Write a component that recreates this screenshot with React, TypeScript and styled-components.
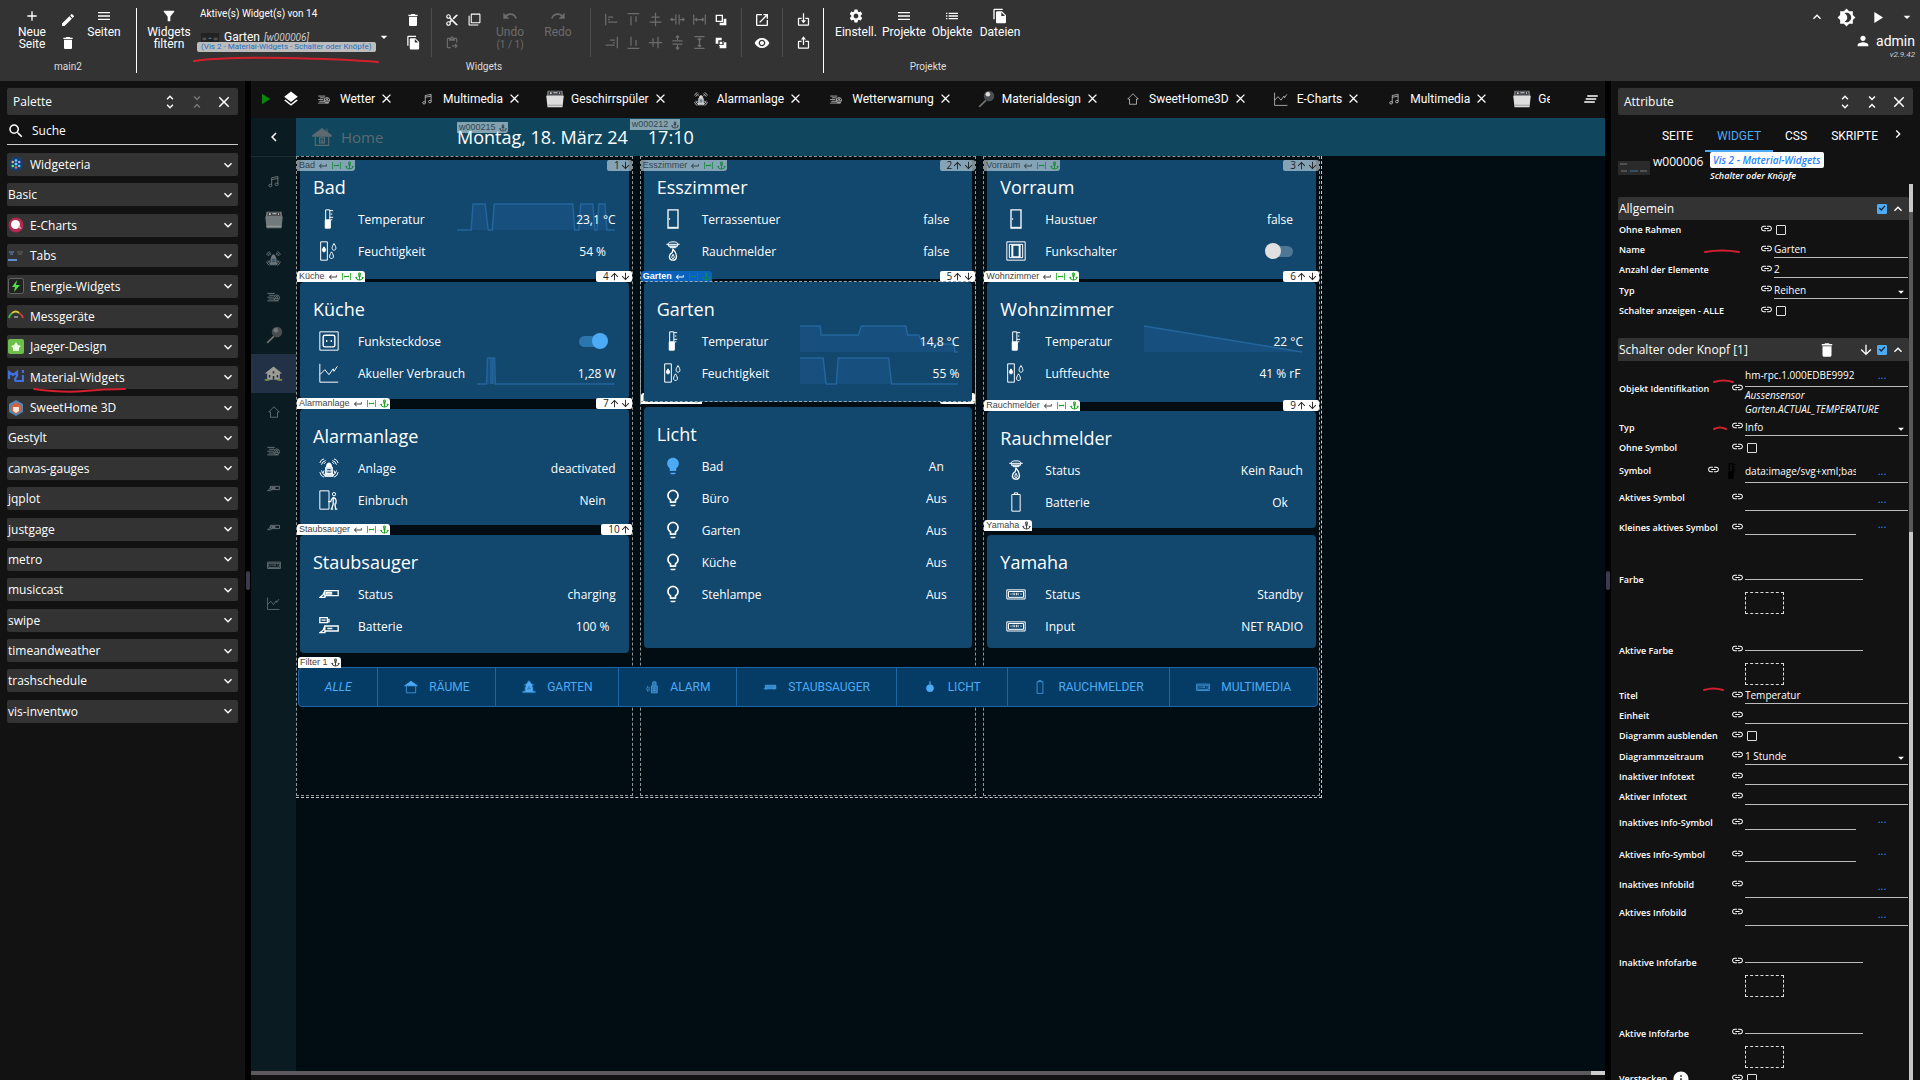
import React from "react";
import styled, { createGlobalStyle, css } from "styled-components";
import {
  MdAdd, MdEdit, MdDelete, MdMenu, MdFilterAlt, MdContentCut, MdFilterNone, MdFileCopy, MdContentPasteGo,
  MdUndo, MdRedo, MdOpenInNew, MdVisibility, MdSettings, MdList, MdKeyboardArrowUp, MdBrightness4, MdPlayArrow,
  MdArrowDropDown, MdPerson, MdUnfoldMore, MdUnfoldLess, MdClose, MdSearch, MdExpandMore, MdExpandLess,
  MdLayers, MdClearAll, MdChevronLeft, MdChevronRight, MdLink, MdArrowDownward, MdArrowUpward,
  MdLightbulb, MdLightbulbOutline, MdInfo, MdKeyboardReturn,
} from "react-icons/md";
import { BiImport, BiExport } from "react-icons/bi";
import { AiOutlineColumnWidth } from "react-icons/ai";
import { FaAnchor } from "react-icons/fa";

const sans = `"Open Sans", "Noto Sans", sans-serif`;
const roboto = `Roboto, "Noto Sans", sans-serif`;
const arial = `"Liberation Sans", Arial, sans-serif`;
const blue = "#4dabf5";

const Global = createGlobalStyle`
  *, *::before, *::after { box-sizing: border-box; }
  body { margin: 0; background: #000; color: #fff; font-family: ${sans}; overflow: hidden; }
  button, input, select { font: inherit; color: inherit; background: none; border: 0; padding: 0; margin: 0; border-radius: 0; }
  button { cursor: pointer; }
  input, select { outline: none; min-width: 0; }
  svg { display: block; flex: none; }
  h1, h2, h3, p, ul { margin: 0; padding: 0; font-weight: 400; list-style: none; }
`;

/* ---------- drawings ---------- */

type Name =
  | "music" | "washer" | "alarm" | "weather" | "ball" | "house" | "home" | "vacuum" | "vacuumBattery" | "radio" | "chart"
  | "thermo" | "humidity" | "door" | "smoke" | "socket" | "switch" | "burglar" | "battery" | "bulb" | "bulbOn"
  | "barn" | "room" | "gnome" | "lock" | "drop" | "robot";

const shapes: Record<Exclude<Name, "bulb" | "bulbOn">, React.ReactNode> = {
  music: (<><path d="M9 18V6l10-2v12M9 9l10-2" /><ellipse cx="7" cy="18.500" rx="2.500" ry="2" /><ellipse cx="17" cy="16.500" rx="2.500" ry="2" /></>),
  washer: (<g stroke="none"><path d="M3 2h18l1 7H2z" fill="#777" /><path d="M5 3h14l1 4H4z" fill="#3d4046" /><path d="M6 4h2v2H6zM10 4h5v1h-5zM17 4h1v2h-1z" fill="#ccc" /><path d="M1.500 8h21L21 22H3z" fill="currentColor" /><path d="M3 19.500h18" stroke="#999" /></g>),
  alarm: (<><path d="M8 19v-8h8v8zM7 19h10v3H7z" fill="currentColor" fillOpacity=".8" /><path d="M9 11q0-5 3-5t3 5" fill="currentColor" /><path d="M10 14h4M10 17h4" stroke="#12476e" /><path d="M1 6q1-4 5-5M3 8q1-4 5-5M6 7l2-2M23 6q-1-4-5-5M21 8q-1-4-5-5M18 7l-2-2M1 17q1 5 5 6M3 15q1 5 5 6M6 15l-1 3M23 17q-1 5-5 6M21 15q-1 5-5 6M18 15l1 3" /></>),
  weather: (<><path d="M2 7h12M5 10h8M2 13h9M4 16h9M2 19h18" /><circle cx="17" cy="14" r="4.500" /><path d="m17 11 2.500 4.500h-5z" /></>),
  ball: (<g stroke="none"><path d="M2 22 11 13l1.500 1.500L4 23z" fill="#777" /><circle cx="16" cy="8" r="7" fill="#4b4e51" /><circle cx="14.500" cy="5.500" r="3" fill="currentColor" /></g>),
  house: (<g stroke="none"><path d="M12 3 1 12h3v8h16v-8h3z" fill="currentColor" /><path d="M11 9h2v3h-2zM6 14h2v3H6zM16 14h2v3h-2zM11 15h2v5h-2z" fill="#2b3138" /><path d="M1 19h6v2H1zM17 19h6v2h-6z" fill="#7d8a4a" /></g>),
  home: <path d="M12 3 3 12h3v9h12v-9h3z" />,
  vacuum: (<><path d="M7 8h16v6H7zM7 8l-2 5-4 3h6l1-2M9 10h6v2H9z" strokeWidth="1.600" /></>),
  vacuumBattery: (<><path d="M7 12h16v6H7zM7 12l-2 5-4 3h6l1-2M10 15h6" strokeWidth="1.600" /><path d="M1 2h9v6H1zM10 4h2v3h-2zM3 5h5" strokeWidth="1.600" /></>),
  radio: (<><path d="M1 7h22v11H1zM3 9h18v7H3z" /><path d="M8 12h8" strokeWidth="3" strokeDasharray="1 1" /><path d="M5.500 12h1M17.500 12h1" strokeWidth="2" /></>),
  chart: (<><path d="M1 1v22h22" /><path d="m1 14 6-6 5 6 5-7 1 3 4-6" /></>),
  thermo: (<><path d="M8 1h5v21H8z" /><path d="M7.500 13h6v10h-6z" fill="currentColor" /><path d="M13 2h4M14 6h2M13 10h4M14 13h2" /></>),
  humidity: (<><path d="M2 1h8v22H2z" /><path d="M6 7c3 4 2 6 0 6s-3-2 0-6z" fill="currentColor" /><path d="M18 3c4 6 2 8 0 8s-4-2 0-8zM15 13c4 6 2 8 0 8s-4-2 0-8z" /></>),
  door: (<><path d="M6 1h12v22H6z" strokeWidth="1.600" /><path d="M8 11v2" /><path d="M6 22h12" /></>),
  smoke: (<><ellipse cx="12" cy="4" rx="6" ry="3" /><path d="M4 4h16M6 6h12M8 8h8" /><path d="M12 10c6 6 5 13 0 13s-6-6-1-9z" strokeWidth="1.600" /><path d="M12 16c2 3 2 5 0 5s-2-2 0-5z" /></>),
  socket: (<><path d="M1 1h22v22H1z" /><rect x="5" y="5" width="14" height="14" rx="2" strokeWidth="1.700" /><path d="M8.500 12h1.500M14 12h1.500" strokeWidth="2.500" /></>),
  switch: (<><path d="M1 1h22v22H1zM4 4h16v16H4zM7 4v16M17 4v16" /><path d="M8 5h8v14H8z" strokeWidth="1.600" /></>),
  burglar: (<><path d="M1 1h11v22H1z" /><circle cx="18" cy="5" r="2" /><path d="M17 9q-2 1-3 5h-3M17 9c4 1 4 4 3 8M17 10v7l-2 6M19 16l1 7M14 23h3M19 23h3" strokeWidth="1.600" /></>),
  battery: <path d="M7 3h10v20H7zM10 3V1h4v2" />,
  barn: (<><path d="M1 10 12 2l11 8v1H1z" fill="currentColor" /><path d="M4 11v11h16V11M9 13h6v6H9zM11 15v3M13 15v3M18 2v4" /></>),
  room: (<><path d="M1 10 12 2l11 8z" fill="currentColor" /><path d="M4 10v12h16V10" /></>),
  gnome: <path d="M12 1c3 2 3 3 3 4l6 4h-3v3h1v7h4v3H1v-3h4v-7h1V9H3l6-4c0-1 0-2 3-4zM10 12h4M9 15h6" fill="currentColor" stroke="#1a5c94" />,
  lock: (<><path d="M13 9V4q3-3 6 0v5M11 10h10v12H11z" fill="currentColor" fillOpacity=".5" /><path d="M5 10q-4 5 0 10M7 12v7M14 14h4M14 18h4" /></>),
  drop: (<><circle cx="12" cy="14" r="6" fill="currentColor" /><path d="M12 2v6" strokeWidth="2" /></>),
  robot: (<><path d="M4 9h18v6H4z" fill="currentColor" fillOpacity=".7" /><path d="M1 15h4l1 2M19 16v1" /></>),
};

function Glyph({ name, size = 20, weight = 1.2 }: { name: Name; size?: number; weight?: number }) {
  if (name === "bulb") return <MdLightbulbOutline size={size} />;
  if (name === "bulbOn") return <MdLightbulb size={size} color={blue} />;
  return (
    <svg width={size} height={size} viewBox="0 0 24 24" fill="none" stroke="currentColor" strokeWidth={weight} aria-hidden>
      {shapes[name]}
    </svg>
  );
}

const alignShapes: React.ReactNode[] = [
  <path d="M2 2v14M5 6h6M5 12h11M5 9h2" />,
  <path d="M2 2h14M6 5v11M12 5v7" />,
  <path d="M9 1v16M4 6h10M2 12h14" />,
  <path d="M7 3v12M11 3v12M1 9h5M12 9h5M3 7 1 9l2 2M15 7l2 2-2 2" />,
  <path d="M2 3v12M16 3v12M4 9h10M6 7 4 9l2 2M12 7l2 2-2 2" />,
  <path d="M16 2v14M13 6H7M13 12H2M13 9h-2" />,
  <path d="M2 16h14M6 13V2M12 13V6" />,
  <path d="M1 9h16M6 4v10M12 2v14" />,
  <path d="M3 7h12M3 11h12M9 1v5M9 12v5M7 3l2-2 2 2M7 15l2 2 2-2" />,
  <path d="M3 2h12M3 16h12M9 4v10M7 6l2-2 2 2M7 12l2 2 2-2" />,
];

const Stroke = styled.svg<{ $x: number; $y: number }>`
  position: absolute;
  left: ${(p) => p.$x}px;
  top: ${(p) => p.$y}px;
  overflow: visible;
  pointer-events: none;
  z-index: 5;
  fill: none;
  stroke: #d3202f;
  stroke-width: 2;
  stroke-linecap: round;
`;

/* ---------- shell ---------- */

const Page = styled.div`display: flex; flex-direction: column; height: 100vh;`;
const Body = styled.div`display: flex; flex: 1; min-height: 0;`;
const Gutter = styled.div`
  width: 6px;
  display: flex;
  align-items: center;
  justify-content: center;
  background: #000;
  &::after { content: ""; width: 4px; height: 19px; border-radius: 2px; background: #3c3a4c; }
`;

/* ---------- ribbon ---------- */

const Ribbon = styled.header`
  display: flex;
  height: 81px;
  padding: 8px 5px 8px 14px;
  background: #333;
  font: 400 12px/12px ${roboto};
`;
const Group = styled.section<{ $pad: string }>`
  display: flex;
  flex-direction: column;
  padding: ${(p) => p.$pad};
`;
const Tools = styled.div`display: flex; height: 50px;`;
const GroupLabel = styled.div`margin-top: 4px; text-align: center; font-size: 10px; color: #ddd;`;
const Divider = styled.div<{ $strong?: boolean }>`
  width: 1px;
  background: ${(p) => (p.$strong ? "#fff" : "#4d4d4d")};
`;
const ToolButton = styled.button<{ $w: number }>`
  width: ${(p) => p.$w}px;
  display: flex;
  flex-direction: column;
  align-items: center;
  gap: 2px;
  text-align: center;
  &:disabled { color: #6c6c6c; }
  small { font-size: 10px; line-height: 9px; }
`;
const IconGrid = styled.div<{ $cols?: number; $w?: number; $m?: string }>`
  display: grid;
  grid-template-columns: repeat(${(p) => p.$cols || 1}, ${(p) => p.$w || 22}px);
  grid-auto-rows: 23px;
  margin: ${(p) => p.$m || 0};
  align-content: start;
`;
const IconButton = styled.button`
  display: flex;
  align-items: center;
  justify-content: center;
  color: #fff;
  &:disabled { color: #6c6c6c; }
`;
const Picker = styled.div`position: relative; width: 200px; margin-left: 5px; padding-left: 2px; line-height: 12px; font-size: 10px;`;
const Picked = styled.button`
  display: grid;
  grid-template-columns: 24px auto 1fr;
  align-items: center;
  width: 192px;
  height: 13px;
  margin-top: 9px;
  text-align: left;
  font-size: 12px;
  line-height: 13px;
  em { font-size: 10px; color: #ccc; padding-left: 1px; }
  > svg:last-child { justify-self: end; }
`;
const PickedType = styled.span`
  display: block;
  width: max-content;
  margin-left: -3px;
  padding: 0 4px;
  border-radius: 2px;
  background: #bdbdbd;
  color: #1f6fc0;
  font-size: 8px;
  line-height: 10px;
`;
const UserArea = styled.div`
  margin-left: auto;
  display: flex;
  flex-direction: column;
  align-items: flex-end;
  font: 400 14px/18px ${roboto};
  small { font: italic 400 8px/10px ${roboto}; color: #ccc; }
`;
const UserTools = styled.div`display: flex; align-items: center; gap: 12px; height: 18px; margin-bottom: 6px;`;
const User = styled.div`display: flex; align-items: center; gap: 5px;`;

function Thumb() {
  return (
    <svg width="20" height="9" viewBox="0 0 24 12" aria-hidden>
      <path fill="#222" d="M0 0h24v12H0z" />
      <path d="M2 7h5M17 7h5M2 9h5M17 9h5" stroke="#777" />
      <path d="M10 7h4" stroke={blue} />
    </svg>
  );
}

function Header() {
  return (
    <Ribbon>
      <Group $pad="0 14px 0 0">
        <Tools>
          <ToolButton $w={36}><MdAdd size={16} />Neue Seite</ToolButton>
          <IconGrid $w={36}>
            <IconButton aria-label="Bearbeiten"><MdEdit size={16} /></IconButton>
            <IconButton aria-label="Löschen"><MdDelete size={16} /></IconButton>
          </IconGrid>
          <ToolButton $w={36}><MdMenu size={16} />Seiten</ToolButton>
        </Tools>
        <GroupLabel>main2</GroupLabel>
      </Group>
      <Divider $strong />
      <Group $pad="0 0 0 8px">
        <Tools>
          <ToolButton $w={48}><MdFilterAlt size={16} />Widgets filtern</ToolButton>
          <Picker>
            Aktive(s) Widget(s) von 14
            <Picked>
              <Thumb />
              <span>Garten <em>[w000006]</em></span>
              <MdArrowDropDown size={16} />
            </Picked>
            <PickedType>(Vis 2 - Material-Widgets - Schalter oder Knöpfe)</PickedType>
            <Stroke $x={-4} $y={49} width="186" height="6"><path d="M0 4q30-4 90-3t94 4" /></Stroke>
          </Picker>
          <IconGrid $w={26} $m="0 5px 0 2px">
            <IconButton aria-label="Widget löschen"><MdDelete size={16} /></IconButton>
            <IconButton aria-label="Widget kopieren"><MdFileCopy size={15} /></IconButton>
          </IconGrid>
          <Divider />
          <IconGrid $cols={2} $m="0 1px 0 9px">
            <IconButton aria-label="Ausschneiden"><MdContentCut size={14} /></IconButton>
            <IconButton aria-label="Kopieren"><MdFilterNone size={13} /></IconButton>
            <IconButton aria-label="Einfügen" disabled><MdContentPasteGo size={14} /></IconButton>
          </IconGrid>
          <ToolButton $w={48} disabled><MdUndo size={16} />Undo<small>(1 / 1)</small></ToolButton>
          <ToolButton $w={48} disabled><MdRedo size={16} />Redo</ToolButton>
          <IconGrid $w={8} />
          <Divider />
          <IconGrid $cols={6} $m="0 9px">
            {alignShapes.map((shape, i) => (
              <React.Fragment key={i}>
                <IconButton disabled aria-label={`Ausrichten ${i + 1}`}>
                  <svg width="15" height="15" viewBox="0 0 18 18" fill="none" stroke="currentColor" strokeWidth="1.500">{shape}</svg>
                </IconButton>
                {i % 5 === 4 && (
                  <IconButton aria-label={i === 4 ? "Nach vorne" : "Nach hinten"}>
                    <svg width="12" height="12" viewBox="0 0 18 18" aria-hidden>
                      {i === 4 ? (
                        <path fillRule="evenodd" fill="currentColor" d="M1 1h11v11H1zM3 3v7h7V3zM13 7h4v10H7v-4h6z" />
                      ) : (
                        <path fillRule="evenodd" fill="currentColor" d="M1 1h9v4H5v5H1zM7 7h4v4H7zM12 6h1v6H6v1h1v4h10V8h-4z" />
                      )}
                    </svg>
                  </IconButton>
                )}
              </React.Fragment>
            ))}
          </IconGrid>
          <Divider />
          <IconGrid $m="0 9px">
            <IconButton aria-label="Neues Fenster"><MdOpenInNew size={16} /></IconButton>
            <IconButton aria-label="Anzeigen"><MdVisibility size={16} /></IconButton>
          </IconGrid>
          <Divider />
          <IconGrid $m="0 9px">
            <IconButton aria-label="Import"><BiImport size={15} /></IconButton>
            <IconButton aria-label="Export"><BiExport size={15} /></IconButton>
          </IconGrid>
        </Tools>
        <GroupLabel>Widgets</GroupLabel>
      </Group>
      <Divider $strong />
      <Group $pad="0 8px">
        <Tools>
          <ToolButton $w={48}><MdSettings size={16} />Einstell.</ToolButton>
          <ToolButton $w={48}><MdMenu size={16} />Projekte</ToolButton>
          <ToolButton $w={48}><MdList size={16} />Objekte</ToolButton>
          <ToolButton $w={48}><MdFileCopy size={16} />Dateien</ToolButton>
        </Tools>
        <GroupLabel>Projekte</GroupLabel>
      </Group>
      <UserArea>
        <UserTools>
          <IconButton aria-label="Einklappen"><MdKeyboardArrowUp size={16} /></IconButton>
          <IconButton aria-label="Thema"><MdBrightness4 size={19} /></IconButton>
          <IconButton aria-label="Start"><MdPlayArrow size={19} /></IconButton>
          <IconButton aria-label="Mehr"><MdArrowDropDown size={16} /></IconButton>
        </UserTools>
        <User><MdPerson size={16} />admin</User>
        <small>v2.9.42</small>
      </UserArea>
    </Ribbon>
  );
}

/* ---------- palette ---------- */

const Side = styled.aside<{ $w: number }>`
  width: ${(p) => p.$w}px;
  flex: none;
  display: flex;
  flex-direction: column;
  padding: 7px 7px 0;
  background: #121212;
`;
const PanelTitle = styled.div`
  display: flex;
  align-items: center;
  gap: 9px;
  height: 27px;
  padding: 0 5px 0 6px;
  border-radius: 2px;
  background: #333;
  h2 { flex: 1; font-size: 12px; }
  button:disabled { color: #777; }
`;
const Search = styled.label`
  display: flex;
  align-items: center;
  gap: 7px;
  height: 30px;
  padding: 2px 0 0;
  border-bottom: 1px solid #ccc;
  input { flex: 1; font-size: 12px; font-weight: 500; }
  input::placeholder { color: #fff; opacity: 1; }
`;
const Folders = styled.ul`
  display: flex;
  flex-direction: column;
  justify-content: space-between;
  height: 570px;
  margin-top: 8px;
`;
const Folder = styled.li`position: relative;`;
const FolderButton = styled.button`
  display: flex;
  align-items: center;
  gap: 6px;
  width: 100%;
  height: 23px;
  padding: 0 2px 0 1px;
  border-radius: 2px;
  background: #333;
  font-size: 12px;
  text-align: left;
  span { flex: 1; }
`;

const logos: Record<string, React.ReactNode> = {
  Widgeteria: (<><circle cx="8" cy="7" r="7" fill="#123f78" /><g fill="#5fd0e8"><circle cx="8" cy="7" r="1.500" /><circle cx="8" cy="3.500" r="1.300" /><circle cx="8" cy="10.500" r="1.300" fill="#e86f50" /><circle cx="4.800" cy="5" r="1.300" fill="#e0b060" /><circle cx="11.200" cy="5" r="1.300" fill="#c58ff0" /><circle cx="4.800" cy="9" r="1.300" fill="#8be060" /><circle cx="11.200" cy="9" r="1.300" /></g></>),
  "E-Charts": (<><circle cx="8" cy="8" r="7.500" fill="#b02a50" /><circle cx="7.500" cy="7.500" r="4.500" fill="#fff" /><path d="m10 11 4 1-3-4z" fill="#e8a0b5" /></>),
  Tabs: (<><path d="M0 12h9" stroke="#5f8fd0" strokeWidth="2" /><path d="M1 4h5M2 6h3" stroke="#5f8fd0" /><path d="M9 4h6M10 6h4" stroke="#666" /></>),
  "Energie-Widgets": (<><rect x=".5" y=".5" width="15" height="15" rx="2" fill="#222" stroke="#666" /><path d="M9 2 4 9h3l-1 5 6-7H8z" fill="#4ee04a" /></>),
  Messgeräte: (<g fill="none" strokeWidth="1.800"><path d="M1 10a8 8 0 0 1 3-5" stroke="#3fc04a" /><path d="M4 5q4-3 7 0" stroke="#d8d030" /><path d="M11 5a8 8 0 0 1 4 5" stroke="#d04040" /><path d="M6 9h4" stroke="#888" strokeWidth="2" /></g>),
  "Jaeger-Design": (<><rect width="16" height="15" rx="2" fill="#6cbf4a" /><path d="m8 3 2 3 3 1-2 2v3H5V9L3 7l3-1z" fill="#e8ffe0" /></>),
  "Material-Widgets": <path d="M1 10V3l4 3 4-3v4q-4 5 0 5h6V6M15 4V1" fill="none" stroke="#3f6fe0" strokeWidth="2.200" />,
  "SweetHome 3D": (<><path d="m8 0 7 4v8l-7 4-7-4V4z" fill="#4f86b8" /><path d="m8 2 5 4v5l-5 3-5-3V6z" fill="#d8603a" /><path d="M5 7h6v4l-3 2-3-2z" fill="#f4e8d8" /></>),
};

const folders = [
  "Widgeteria", "Basic", "E-Charts", "Tabs", "Energie-Widgets", "Messgeräte", "Jaeger-Design", "Material-Widgets",
  "SweetHome 3D", "Gestylt", "canvas-gauges", "jqplot", "justgage", "metro", "musiccast", "swipe", "timeandweather",
  "trashschedule", "vis-inventwo",
];

function Palette() {
  return (
    <Side $w={245}>
      <PanelTitle>
        <h2>Palette</h2>
        <IconButton aria-label="Alle öffnen"><MdUnfoldMore size={18} /></IconButton>
        <IconButton aria-label="Alle schließen" disabled><MdUnfoldLess size={18} /></IconButton>
        <IconButton aria-label="Palette schließen"><MdClose size={18} /></IconButton>
      </PanelTitle>
      <Search>
        <MdSearch size={18} />
        <input aria-label="Suche" placeholder="Suche" />
      </Search>
      <Folders>
        {folders.map((name) => (
          <Folder key={name}>
            <FolderButton>
              {logos[name] && <svg width="16" height="16" viewBox="0 0 16 16" aria-hidden>{logos[name]}</svg>}
              <span>{name}</span>
              <MdExpandMore size={16} />
            </FolderButton>
            {name === "Material-Widgets" && (
              <Stroke $x={27} $y={22} width="92" height="5"><path d="M0 1q30 4 50 2t41-2" /></Stroke>
            )}
          </Folder>
        ))}
      </Folders>
    </Side>
  );
}

/* ---------- view tabs ---------- */

const Center = styled.main`flex: 1; min-width: 0; display: flex; flex-direction: column; background: #010d12;`;
const TabBar = styled.nav`
  display: flex;
  align-items: center;
  height: 37px;
  padding: 0 5px 2px;
  background: #121212;
  font: 400 12px/16px ${roboto};
`;
const Tabs = styled.div`display: flex; flex: 1; min-width: 0; overflow: hidden; margin-left: 3px;`;
const Tab = styled.div`display: flex; align-items: center; flex: none; padding: 0 12px;`;
const TabLink = styled.button`display: flex; align-items: center; gap: 7px; margin-right: 4px;`;

const viewTabs: [string, Name][] = [
  ["Wetter", "weather"], ["Multimedia", "music"], ["Geschirrspüler", "washer"], ["Alarmanlage", "alarm"],
  ["Wetterwarnung", "weather"], ["Materialdesign", "ball"], ["SweetHome3D", "home"], ["E-Charts", "chart"],
  ["Multimedia", "music"], ["Geschirrspüler", "washer"],
];

const TabIcon = styled.span`width: 18px; display: flex; justify-content: center; color: #ddd;`;
const TabsEnd = styled.div`width: 32px;`;

/* ---------- view ---------- */

const View = styled.div`display: flex; flex: 1; min-height: 0;`;
const Rail = styled.nav`width: 45px; flex: none; background: #0a1c22; display: flex; flex-direction: column;`;
const RailToggle = styled.button`
  display: flex;
  align-items: center;
  justify-content: center;
  height: 39px;
  border-bottom: 1px solid #1c2c33;
`;
const RailList = styled.div`display: flex; flex-direction: column; height: 461px; margin-top: 5px;`;
const RailItem = styled.button<{ $active?: boolean }>`
  flex: 1;
  display: flex;
  align-items: center;
  justify-content: center;
  color: ${(p) => (p.$active ? "#9c9c96" : "#70797c")};
  background: ${(p) => (p.$active ? "#233147" : "none")};
`;
const railIcons: [Name, number][] = [
  ["music", 15], ["washer", 20], ["alarm", 15], ["weather", 15], ["ball", 18], ["house", 19], ["home", 14],
  ["weather", 15], ["vacuum", 13], ["vacuum", 13], ["radio", 14], ["chart", 13],
];

const Stage = styled.div`flex: 1; min-width: 0;`;
const AppBar = styled.div`
  display: flex;
  align-items: center;
  height: 38px;
  padding-left: 16px;
  background: #10475e;
  color: #5d6a70;
  h1 { width: 108px; margin-left: 9px; font-size: 15px; }
`;
const Clock = styled.div<{ $ml: number }>`
  position: relative;
  margin-left: ${(p) => p.$ml}px;
  font-size: 18px;
  line-height: 38px;
  color: #fff;
`;

const Tag = styled.span<{ $kind?: "dim" | "sel"; $x?: number; $y?: string }>`
  position: absolute;
  left: ${(p) => p.$x ?? -3}px;
  ${(p) => p.$y || "bottom: 100%;"}
  display: flex;
  align-items: center;
  gap: 3px;
  height: 11px;
  padding: 0 1px 0 2px;
  border-radius: 3px 3px 0 0;
  font: 9px/11px ${arial};
  white-space: nowrap;
  background: #fff;
  color: #444;
  svg.g { color: #1ea321; }
  ${(p) => p.$kind === "dim" && css`background: rgba(210, 225, 232, .6); color: #33464f; border-radius: 0 0 3px 0; svg.g { color: #178a3c; }`}
  ${(p) => p.$kind === "sel" && css`background: #0a62bd; color: #fff; font-weight: 700; svg.g { color: #0d8a55; }`}
`;
const Order = styled.span<{ $dim?: boolean; $lift: number }>`
  position: absolute;
  right: -3px;
  ${(p) => (p.$dim ? "top: 0;" : `bottom: calc(100% + ${p.$lift}px);`)}
  display: flex;
  align-items: center;
  gap: 0;
  height: 11px;
  padding: 0 1px 0 7px;
  background: ${(p) => (p.$dim ? "rgba(210, 225, 232, .6)" : "#fff")};
  border-radius: 2px;
  color: #222;
  font: 10px/11px ${sans};
`;
const Board = styled.div`
  display: grid;
  grid-template-columns: repeat(3, 1fr);
  column-gap: 7px;
  max-width: 1026px;
  min-height: 642px;
  padding: 0 1px 1px 0;
  border: dashed #c8c8c8;
  border-width: 0 1px 1px 0;
`;
const Column = styled.div<{ $n: number }>`
  grid-row: 1;
  grid-column: ${(p) => p.$n};
  min-width: 0;
  padding: 3px;
  border: 1px dashed #8f9799;
`;
const Slot = styled.div<{ $gap: number; $sel?: boolean }>`
  position: relative;
  margin-top: ${(p) => p.$gap}px;
  ${(p) => p.$sel && css`
    z-index: 1;
    &::after { content: ""; position: absolute; inset: -1px -4px 0; border: 1px dashed #9aa7ad; pointer-events: none; }
  `}
`;
const Card = styled.section<{ $min: number }>`
  position: relative;
  min-height: ${(p) => p.$min}px;
  padding: 15px 13px 4px;
  border-radius: 4px;
  background: #12476e;
  h3 { margin-bottom: 4px; font-size: 18px; line-height: 24px; }
`;
const Line = styled.div`
  display: grid;
  grid-template-columns: 32px auto 1fr;
  column-gap: 13px;
  align-items: center;
  height: 32px;
  font-size: 12px;
  > svg { justify-self: center; }
`;
const Cell = styled.div`display: grid; justify-items: end; align-items: center; > * { grid-area: 1 / 1; }`;
const Value = styled.span<{ $end?: boolean }>`
  position: relative;
  min-width: ${(p) => (p.$end ? 0 : 46)}px;
  text-align: center;
`;
const Plot = styled.svg`
  width: 100%;
  max-width: 158px;
  height: 28px;
  margin-right: 1px;
  margin-bottom: 4px;
  fill: #17507f;
  stroke: #24659c;
`;
const Switch = styled.input`
  appearance: none;
  position: relative;
  width: 29px;
  height: 16px;
  margin-right: 9px;
  cursor: pointer;
  &::before { content: ""; position: absolute; inset: 3px 1px 2px; border-radius: 6px; background: #4d7794; }
  &::after { content: ""; position: absolute; left: 0; top: 0; width: 16px; height: 16px; border-radius: 50%; background: #e0e0e0; }
  &:checked::before { background: #2c76ae; }
  &:checked::after { left: 14px; background: ${blue}; }
`;

type LineData = { icon: Name; label: string; value?: string; on?: boolean; plot?: string };
type CardData = {
  title: string; min: number; gap: number; lines: LineData[]; order?: number; up?: boolean; down?: boolean;
  tag?: "dim" | "sel"; plain?: boolean; lift?: number;
};

const columns: CardData[][] = [
  [
    { title: "Bad", min: 119, gap: 0, order: 1, down: true, tag: "dim", lines: [
      { icon: "thermo", label: "Temperatur", value: "23,1 °C", plot: "M0 27H14L16 1H28L31 27H35L37 1H115L117 27H121L123 1H135L137 27H139L141 1H147L149 27H157" },
      { icon: "humidity", label: "Feuchtigkeit", value: "54 %" }] },
    { title: "Küche", min: 117, gap: 3, order: 4, up: true, down: true, lines: [
      { icon: "socket", label: "Funksteckdose", on: true },
      { icon: "chart", label: "Akueller Verbrauch", value: "1,28 W", plot: "M0 27H11L12 1H16V26H18V1H20L21 27H157" }] },
    { title: "Alarmanlage", min: 116, gap: 10, order: 7, up: true, down: true, lines: [
      { icon: "alarm", label: "Anlage", value: "deactivated" },
      { icon: "burglar", label: "Einbruch", value: "Nein" }] },
    { title: "Staubsauger", min: 118, gap: 10, order: 10, up: true, lines: [
      { icon: "vacuum", label: "Status", value: "charging" },
      { icon: "vacuumBattery", label: "Batterie", value: "100 %" }] },
  ],
  [
    { title: "Esszimmer", min: 119, gap: 0, order: 2, up: true, down: true, tag: "dim", lines: [
      { icon: "door", label: "Terrassentuer", value: "false" },
      { icon: "smoke", label: "Rauchmelder", value: "false" }] },
    { title: "Garten", min: 120, gap: 3, order: 5, up: true, down: true, tag: "sel", lines: [
      { icon: "thermo", label: "Temperatur", value: "14,8 °C", plot: "M0 1H20L21 10H58L61 1H105L107 10H118L122 19H153L154 27H157" },
      { icon: "humidity", label: "Feuchtigkeit", value: "55 %", plot: "M0 1H23L26 27H36L38 1H88L91 27H157" }] },
    { title: "Licht", min: 241, gap: 5, order: 8, up: true, down: true, lift: 3, lines: [
      { icon: "bulbOn", label: "Bad", value: "An" },
      { icon: "bulb", label: "Büro", value: "Aus" },
      { icon: "bulb", label: "Garten", value: "Aus" },
      { icon: "bulb", label: "Küche", value: "Aus" },
      { icon: "bulb", label: "Stehlampe", value: "Aus" }] },
  ],
  [
    { title: "Vorraum", min: 119, gap: 0, order: 3, up: true, down: true, tag: "dim", lines: [
      { icon: "door", label: "Haustuer", value: "false" },
      { icon: "switch", label: "Funkschalter", on: false }] },
    { title: "Wohnzimmer", min: 120, gap: 3, order: 6, up: true, down: true, lines: [
      { icon: "thermo", label: "Temperatur", value: "22 °C", plot: "M0 1L157 27" },
      { icon: "humidity", label: "Luftfeuchte", value: "41 % rF" }] },
    { title: "Rauchmelder", min: 117, gap: 9, order: 9, up: true, down: true, lines: [
      { icon: "smoke", label: "Status", value: "Kein Rauch" },
      { icon: "battery", label: "Batterie", value: "Ok" }] },
    { title: "Yamaha", min: 113, gap: 7, plain: true, lift: 4, lines: [
      { icon: "radio", label: "Status", value: "Standby" },
      { icon: "radio", label: "Input", value: "NET RADIO" }] },
  ],
];

function tagPlace(card: CardData) {
  if (card.tag === "dim") return "top: 0;";
  return `bottom: calc(100% + ${card.lift || 0}px);`;
}

function Widget({ card }: { card: CardData }) {
  return (
    <Slot $gap={card.gap} $sel={card.tag === "sel"}>
      <Card $min={card.min}>
        <h3>{card.title}</h3>
        {card.lines.map((line) => (
          <Line key={line.label}>
            <Glyph name={line.icon} />
            <span>{line.label}</span>
            <Cell>
              {line.plot && (
                <Plot viewBox="0 0 157 28" preserveAspectRatio="none" aria-hidden>
                  <path d={`${line.plot}V27H0Z`} stroke="none" />
                  <path d={line.plot} fill="none" strokeWidth="1.500" vectorEffect="non-scaling-stroke" />
                </Plot>
              )}
              {line.value !== undefined && <Value $end={!!line.plot}>{line.value}</Value>}
              {line.on !== undefined && <Switch type="checkbox" role="switch" aria-label={line.label} defaultChecked={line.on} />}
            </Cell>
          </Line>
        ))}
      </Card>
      <Tag $kind={card.tag} $y={tagPlace(card)}>
        {card.title}
        {!card.plain && <><MdKeyboardReturn size={10} /><AiOutlineColumnWidth className="g" size={11} /></>}
        <FaAnchor className={card.plain ? "" : "g"} size={9} />
      </Tag>
      {card.order && (
        <Order $dim={card.tag === "dim"} $lift={card.lift || 0}>
          {card.order}
          {card.up && <MdArrowUpward size={11} />}
          {card.down && <MdArrowDownward size={11} />}
        </Order>
      )}
    </Slot>
  );
}

const FilterBar = styled.div`
  position: relative;
  z-index: 2;
  grid-area: 1 / 1 / 2 / -1;
  align-self: end;
  display: flex;
  height: 40px;
  margin: 0 2px 89px 2px;
  border: 1px solid #1f66a6;
  border-radius: 4px;
  background: #053c66;
  font: 400 12px/16px ${roboto};
  color: ${blue};
`;
const FilterButton = styled.button<{ $all?: boolean }>`
  flex: 1 1 auto;
  display: flex;
  align-items: center;
  justify-content: center;
  gap: 11px;
  padding: 0 25px;
  font-style: ${(p) => (p.$all ? "italic" : "normal")};
  & + & { border-left: 1px solid #1f66a6; }
`;
const filters: [string, Name?][] = [
  ["ALLE"], ["RÄUME", "room"], ["GARTEN", "gnome"], ["ALARM", "lock"], ["STAUBSAUGER", "robot"], ["LICHT", "drop"],
  ["RAUCHMELDER", "battery"], ["MULTIMEDIA", "radio"],
];
const HScroll = styled.div`
  height: 9px;
  border-bottom: 5px solid #121212;
  background: #ccc;
  &::after { content: ""; display: block; width: 99%; height: 100%; background: #5c5a5c; }
`;

function Project() {
  return (
    <Center>
      <TabBar>
        <IconButton aria-label="Laufzeit" style={{ color: "#0b860b" }}><MdPlayArrow size={18} /></IconButton>
        <IconGrid $w={8} />
        <IconButton aria-label="Ebenen"><MdLayers size={18} /></IconButton>
        <Tabs>
          {viewTabs.map(([name, icon], i) => (
            <Tab key={i}>
              <TabLink>
                <TabIcon><Glyph name={icon} size={icon === "washer" ? 20 : icon === "ball" ? 18 : 14} /></TabIcon>
                {name}
              </TabLink>
              <IconButton aria-label={`${name} schließen`}><MdClose size={15} /></IconButton>
            </Tab>
          ))}
        </Tabs>
        <TabsEnd />
        <IconButton aria-label="Alle Ansichten"><MdClearAll size={18} /></IconButton>
      </TabBar>
      <View>
        <Rail>
          <RailToggle aria-label="Zurück"><MdChevronLeft size={18} /></RailToggle>
          <RailList>
            {railIcons.map(([icon, size], i) => (
              <RailItem key={i} $active={icon === "house"} aria-label={icon}>
                <Glyph name={icon} size={size} weight={1.4} />
              </RailItem>
            ))}
          </RailList>
        </Rail>
        <Stage>
          <AppBar>
            <Glyph name="barn" size={20} weight={1.3} />
            <h1>Home</h1>
            <Clock $ml={8}>
              Montag, 18. März 24
              <Tag $kind="dim" $x={0} $y="top: 4px;">w000215<FaAnchor size={8} /></Tag>
            </Clock>
            <Clock $ml={20}>
              17:10
              <Tag $kind="dim" $x={-18} $y="top: 1px;">w000212<FaAnchor size={8} /></Tag>
            </Clock>
          </AppBar>
          <Board>
            {columns.map((cards, i) => (
              <Column key={i} $n={i + 1}>{cards.map((card) => <Widget key={card.title} card={card} />)}</Column>
            ))}
            <FilterBar>
              {filters.map(([name, icon]) => (
                <FilterButton key={name} $all={!icon}>
                  {icon && <Glyph name={icon} size={14} />}
                  {name}
                </FilterButton>
              ))}
              <Tag $x={-1}>Filter 1<FaAnchor size={9} /></Tag>
            </FilterBar>
          </Board>
        </Stage>
      </View>
      <HScroll />
    </Center>
  );
}

/* ---------- attributes ---------- */

const AttrTabs = styled.div`
  display: flex;
  align-items: center;
  justify-content: flex-end;
  height: 37px;
  padding-right: 7px;
  font: 400 12px/16px ${roboto};
`;
const AttrTab = styled.button<{ $active?: boolean }>`
  height: 37px;
  padding: 7px 12px 0;
  color: ${(p) => (p.$active ? blue : "#fff")};
  border-bottom: 2px solid ${(p) => (p.$active ? blue : "transparent")};
`;
const WidgetInfo = styled.div`
  display: grid;
  grid-template-columns: 32px 54px 1fr;
  column-gap: 3px;
  height: 32px;
  font-size: 12px;
  line-height: 20px;
  svg { margin-top: 9px; }
`;
const KindInfo = styled.div`
  display: flex;
  flex-direction: column;
  align-items: flex-start;
  font-style: italic;
  font-size: 10px;
  line-height: 16px;
  b { padding: 0 3px; border-radius: 2px; background: #fff; color: #1f84ff; font-weight: 600; }
  span { font-size: 9px; font-weight: 600; }
`;
const Scroller = styled.div`display: flex; flex: 1; min-height: 0;`;
const Form = styled.div`flex: 1; min-width: 0; overflow: hidden; padding-top: 13px;`;
const Track = styled.div`
  width: 4px;
  background: #c8c8c8;
  padding-top: 28px;
  &::after { content: ""; display: block; width: 4px; height: 320px; background: #5a5a5a; }
`;
const Check = styled.input`
  appearance: none;
  display: block;
  width: 10px;
  height: 10px;
  border: 1px solid #e0e0e0;
  border-radius: 1px;
  &:checked { border-color: ${blue}; background: ${blue}; }
  &:checked::after {
    content: "";
    display: block;
    width: 8px;
    height: 8px;
    background: #12263a;
    clip-path: polygon(10% 48%, 22% 36%, 40% 55%, 80% 14%, 92% 26%, 40% 80%);
  }
`;
const GroupHead = styled.div<{ $gap?: number }>`
  display: flex;
  align-items: center;
  gap: 3px;
  height: 23px;
  margin-top: ${(p) => p.$gap || 0}px;
  padding: 0 3px 0 1px;
  border-radius: 2px 2px 0 0;
  background: #333;
  h3 { flex: 1; font-size: 12px; }
`;
const TrashButton = styled(IconButton)`margin-right: 19px;`;
const Row = styled.div<{ $h: number; $w: number }>`
  position: relative;
  display: grid;
  grid-template-columns: 1fr 16px ${(p) => p.$w}px;
  column-gap: 1px;
  height: ${(p) => p.$h}px;
  padding-right: 1px;
  font-size: 9px;
  line-height: 12px;
  label { align-self: center; padding-left: 1px; display: flex; align-items: center; gap: 5px; font-weight: 600; }
  > svg.link { align-self: center; justify-self: end; margin-bottom: 4px; }
`;
const Control = styled.div<{ $pb: number }>`
  position: relative;
  align-self: end;
  padding-bottom: ${(p) => p.$pb}px;
  font-size: 10px;
  font-weight: 500;
  > ${Check} { margin-left: 2px; }
`;
const Picking = styled.div<{ $full?: boolean }>`
  display: flex;
  align-items: flex-start;
  border-bottom: 1px solid ${(p) => (p.$full ? "#bbb" : "transparent")};
`;
const Field = styled.input<{ $w?: number; $line?: boolean; $up?: boolean }>`
  display: block;
  width: ${(p) => (p.$w ? `${p.$w}px` : "100%")};
  height: 18px;
  padding-bottom: ${(p) => (p.$up ? 3 : 0)}px;
  border-bottom: 1px solid ${(p) => (p.$line ? "#bbb" : "transparent")};
`;
const Dots = styled.button`flex: 1; color: #2f8be8; font-size: 11px; line-height: 14px;`;
const Choice = styled.select`
  display: block;
  appearance: none;
  width: 100%;
  height: 17px;
  border-bottom: 1px solid #bbb;
`;
const Caret = styled(MdArrowDropDown)`position: absolute; right: 0; top: 3px; pointer-events: none;`;
const Swatch = styled.button`display: block; width: 39px; height: 22px; margin-top: 12px; border: 1px dashed #ddd;`;
const Helper = styled.p`font-style: italic; font-size: 10px; font-weight: 400; line-height: 14px; padding-top: 1px;`;
const Preview = styled.span`position: absolute; left: 106px; top: 5px; color: #000;`;

type Kind = "check" | "text" | "select" | "object" | "symbol" | "file" | "short" | "color";
const heights: Record<Kind, number> = { check: 20, text: 20, select: 21, object: 56, symbol: 26, file: 28, short: 32, color: 71 };

function Attr({ label, kind, value = "", narrow, info, mark }: {
  label: string; kind: Kind; value?: string; narrow?: boolean; info?: boolean; mark?: [number, number, number];
}) {
  const id = React.useId();
  const symbol = kind === "symbol";
  return (
    <Row $h={heights[kind]} $w={narrow ? 134 : 163}>
      <label htmlFor={id}>{label}{info && <MdInfo size={18} />}</label>
      <MdLink className="link" size={13} style={symbol ? { marginRight: 24 } : undefined} />
      {symbol && <Preview><Glyph name="thermo" size={16} weight={2} /></Preview>}
      {kind === "check" && <Control $pb={5}><Check id={id} type="checkbox" /></Control>}
      {kind === "text" && <Control $pb={2}><Field id={id} $line defaultValue={value} /></Control>}
      {kind === "select" && (
        <Control $pb={2}>
          <Choice id={id} defaultValue={value}><option>{value}</option></Choice>
          <Caret size={14} />
        </Control>
      )}
      {(kind === "object" || kind === "symbol" || kind === "file") && (
        <Control $pb={1}>
          <Picking $full>
            <Field id={id} $w={111} $up defaultValue={value} />
            <Dots aria-label={`${label} wählen`}>...</Dots>
          </Picking>
          {kind === "object" && <Helper>Aussensensor<br />Garten.ACTUAL_TEMPERATURE</Helper>}
        </Control>
      )}
      {kind === "short" && (
        <Control $pb={8}>
          <Picking>
            <Field id={id} $w={111} $line defaultValue={value} />
            <Dots aria-label={`${label} wählen`}>...</Dots>
          </Picking>
        </Control>
      )}
      {kind === "color" && (
        <Control $pb={1}>
          <Field id={id} $w={118} $line defaultValue={value} />
          <Swatch aria-label={`${label} wählen`} />
        </Control>
      )}
      {mark && (
        <Stroke $x={mark[0]} $y={mark[1]} width={mark[2]} height="4"><path d={`M1 2Q${mark[2] / 2} -1 ${mark[2] - 1} 2`} /></Stroke>
      )}
    </Row>
  );
}

function Attributes() {
  return (
    <Side $w={309}>
      <PanelTitle>
        <h2>Attribute</h2>
        <IconButton aria-label="Alle öffnen"><MdUnfoldMore size={18} /></IconButton>
        <IconButton aria-label="Alle schließen"><MdUnfoldLess size={18} /></IconButton>
        <IconButton aria-label="Attribute schließen"><MdClose size={18} /></IconButton>
      </PanelTitle>
      <AttrTabs>
        <AttrTab>SEITE</AttrTab>
        <AttrTab $active>WIDGET</AttrTab>
        <AttrTab>CSS</AttrTab>
        <AttrTab>SKRIPTE</AttrTab>
        <MdChevronRight size={16} />
      </AttrTabs>
      <WidgetInfo>
        <svg width="32" height="14" viewBox="0 0 32 14" aria-hidden>
          <path fill="#2a2a2a" d="M0 0h32v14H0z" />
          <path d="M2 3h7M3 10h6M22 10h7" stroke="#777" />
          <path d="M12 10h8" stroke={blue} opacity=".6" />
        </svg>
        <span>w000006</span>
        <KindInfo><b>Vis 2 - Material-Widgets</b><span>Schalter oder Knöpfe</span></KindInfo>
      </WidgetInfo>
      <Scroller>
        <Form>
          <GroupHead>
            <h3>Allgemein</h3>
            <Check type="checkbox" defaultChecked aria-label="Allgemein" />
            <IconButton aria-label="Zuklappen"><MdExpandLess size={16} /></IconButton>
          </GroupHead>
          <Attr narrow label="Ohne Rahmen" kind="check" />
          <Attr narrow label="Name" kind="text" value="Garten" mark={[86, 10, 36]} />
          <Attr narrow label="Anzahl der Elemente" kind="text" value="2" />
          <Attr narrow label="Typ" kind="select" value="Reihen" />
          <Attr narrow label="Schalter anzeigen - ALLE" kind="check" />
          <GroupHead $gap={17}>
            <h3>Schalter oder Knopf [1]</h3>
            <TrashButton aria-label="Gruppe löschen"><MdDelete size={18} /></TrashButton>
            <IconButton aria-label="Nach unten"><MdArrowDownward size={16} /></IconButton>
            <Check type="checkbox" defaultChecked aria-label="Schalter oder Knopf" />
            <IconButton aria-label="Zuklappen"><MdExpandLess size={16} /></IconButton>
          </GroupHead>
          <Attr label="Objekt Identifikation" kind="object" value="hm-rpc.1.000EDBE9992" mark={[95, 19, 21]} />
          <Attr label="Typ" kind="select" value="Info" mark={[95, 10, 14]} />
          <Attr label="Ohne Symbol" kind="check" />
          <Attr label="Symbol" kind="symbol" value="data:image/svg+xml;base64" />
          <Attr label="Aktives Symbol" kind="file" />
          <Attr label="Kleines aktives Symbol" kind="short" />
          <Attr label="Farbe" kind="color" />
          <Attr label="Aktive Farbe" kind="color" />
          <Attr label="Titel" kind="text" value="Temperatur" mark={[85, 2, 21]} />
          <Attr label="Einheit" kind="text" />
          <Attr label="Diagramm ausblenden" kind="check" />
          <Attr label="Diagrammzeitraum" kind="select" value="1 Stunde" />
          <Attr label="Inaktiver Infotext" kind="text" />
          <Attr label="Aktiver Infotext" kind="text" />
          <Attr label="Inaktives Info-Symbol" kind="short" />
          <Attr label="Aktives Info-Symbol" kind="short" />
          <Attr label="Inaktives Infobild" kind="file" />
          <Attr label="Aktives Infobild" kind="file" />
          <Attr label="Inaktive Infofarbe" kind="color" />
          <Attr label="Aktive Infofarbe" kind="color" />
          <Attr label="Verstecken" kind="check" info />
        </Form>
        <Track />
      </Scroller>
    </Side>
  );
}

export default function App() {
  return (
    <Page>
      <Global />
      <Header />
      <Body>
        <Palette />
        <Gutter />
        <Project />
        <Gutter />
        <Attributes />
      </Body>
    </Page>
  );
}
